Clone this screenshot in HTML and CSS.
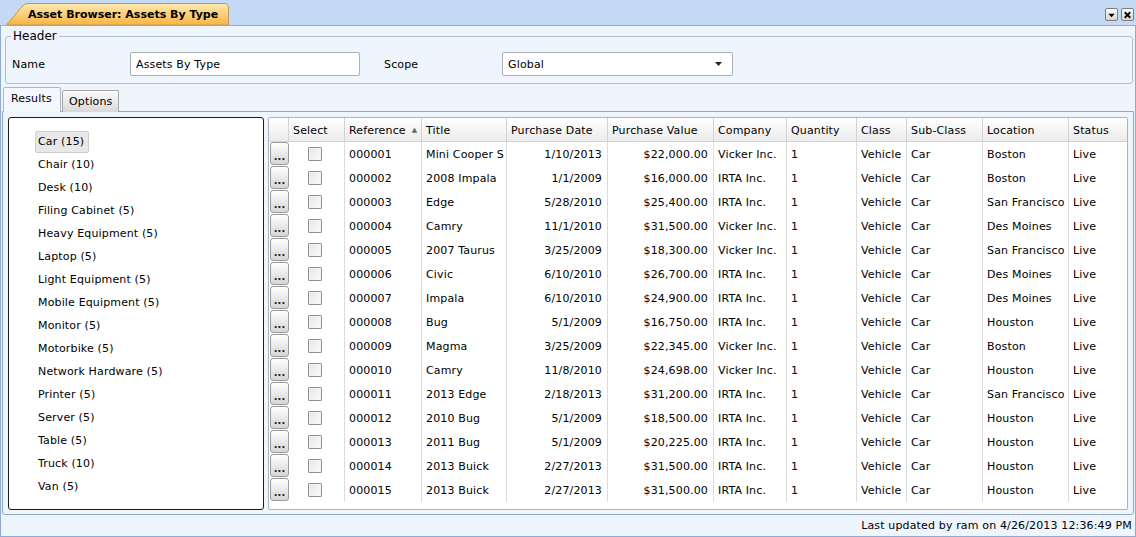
FILE: index.html
```html
<!DOCTYPE html>
<html>
<head>
<meta charset="utf-8">
<link rel="stylesheet" href="styles.css">
</head>
<body>
<div class="titlebar">
  <div class="doc-tab">
    <svg class="doc-tab-bg" width="224" height="22" viewBox="0 0 224 22">
      <defs>
        <linearGradient id="tabg" x1="0" y1="0" x2="0" y2="1">
          <stop offset="0" stop-color="#fde9b0"/>
          <stop offset="0.45" stop-color="#fcd27c"/>
          <stop offset="1" stop-color="#f8b443"/>
        </linearGradient>
      </defs>
      <path d="M0.5 22 L16.5 3 Q18.5 0.5 22 0.5 L219 0.5 Q222.5 0.5 222.5 4 L222.5 22 Z" fill="url(#tabg)" stroke="#c4964f" stroke-width="1"/>
    </svg>
    <span class="doc-tab-text">Asset Browser: Assets By Type</span>
  </div>
  <div class="win-buttons">
    <span class="win-btn"><svg width="12" height="12" viewBox="0 0 12 12"><polygon points="2.5,4.5 9.5,4.5 6,8.5" fill="#000"/></svg></span>
    <span class="win-btn"><svg width="12" height="12" viewBox="0 0 12 12"><path d="M3 3 L9 9 M9 3 L3 9" stroke="#000" stroke-width="2"/></svg></span>
  </div>
</div>
<div class="panel">
  <fieldset class="header-box">
    <legend>Header</legend>
    <div class="header-row">
      <span class="field-label">Name</span>
      <div class="text-input">Assets By Type</div>
      <span class="field-label scope-label">Scope</span>
      <div class="select-input"><span>Global</span><svg width="8" height="5" viewBox="0 0 8 5"><polygon points="0,0 7,0 3.5,4" fill="#222"/></svg></div>
    </div>
  </fieldset>
  <div class="tabs">
    <div class="tab active">Results</div>
    <div class="tab">Options</div>
  </div>
  <div class="pane">
    <ul class="listbox">
      <li class="selected">Car (15)</li>
      <li>Chair (10)</li>
      <li>Desk (10)</li>
      <li>Filing Cabinet (5)</li>
      <li>Heavy Equipment (5)</li>
      <li>Laptop (5)</li>
      <li>Light Equipment (5)</li>
      <li>Mobile Equipment (5)</li>
      <li>Monitor (5)</li>
      <li>Motorbike (5)</li>
      <li>Network Hardware (5)</li>
      <li>Printer (5)</li>
      <li>Server (5)</li>
      <li>Table (5)</li>
      <li>Truck (10)</li>
      <li>Van (5)</li>
    </ul>
    <div class="grid">
      <div class="grid-table">
        <div class="row head">
          <div class="h"></div><div class="h">Select</div><div class="h">Reference<span class="sort">▲</span></div><div class="h">Title</div><div class="h">Purchase Date</div><div class="h">Purchase Value</div><div class="h">Company</div><div class="h">Quantity</div><div class="h">Class</div><div class="h">Sub-Class</div><div class="h">Location</div><div class="h">Status</div>
        </div>
        <div class="row"><div class="c b"><span class="btn">...</span></div><div class="c s"><span class="chk"></span></div><div class="c">000001</div><div class="c">Mini Cooper S</div><div class="c r">1/10/2013</div><div class="c r">$22,000.00</div><div class="c">Vicker Inc.</div><div class="c">1</div><div class="c">Vehicle</div><div class="c">Car</div><div class="c">Boston</div><div class="c">Live</div></div>
        <div class="row"><div class="c b"><span class="btn">...</span></div><div class="c s"><span class="chk"></span></div><div class="c">000002</div><div class="c">2008 Impala</div><div class="c r">1/1/2009</div><div class="c r">$16,000.00</div><div class="c">IRTA Inc.</div><div class="c">1</div><div class="c">Vehicle</div><div class="c">Car</div><div class="c">Boston</div><div class="c">Live</div></div>
        <div class="row"><div class="c b"><span class="btn">...</span></div><div class="c s"><span class="chk"></span></div><div class="c">000003</div><div class="c">Edge</div><div class="c r">5/28/2010</div><div class="c r">$25,400.00</div><div class="c">IRTA Inc.</div><div class="c">1</div><div class="c">Vehicle</div><div class="c">Car</div><div class="c">San Francisco</div><div class="c">Live</div></div>
        <div class="row"><div class="c b"><span class="btn">...</span></div><div class="c s"><span class="chk"></span></div><div class="c">000004</div><div class="c">Camry</div><div class="c r">11/1/2010</div><div class="c r">$31,500.00</div><div class="c">Vicker Inc.</div><div class="c">1</div><div class="c">Vehicle</div><div class="c">Car</div><div class="c">Des Moines</div><div class="c">Live</div></div>
        <div class="row"><div class="c b"><span class="btn">...</span></div><div class="c s"><span class="chk"></span></div><div class="c">000005</div><div class="c">2007 Taurus</div><div class="c r">3/25/2009</div><div class="c r">$18,300.00</div><div class="c">Vicker Inc.</div><div class="c">1</div><div class="c">Vehicle</div><div class="c">Car</div><div class="c">San Francisco</div><div class="c">Live</div></div>
        <div class="row"><div class="c b"><span class="btn">...</span></div><div class="c s"><span class="chk"></span></div><div class="c">000006</div><div class="c">Civic</div><div class="c r">6/10/2010</div><div class="c r">$26,700.00</div><div class="c">IRTA Inc.</div><div class="c">1</div><div class="c">Vehicle</div><div class="c">Car</div><div class="c">Des Moines</div><div class="c">Live</div></div>
        <div class="row"><div class="c b"><span class="btn">...</span></div><div class="c s"><span class="chk"></span></div><div class="c">000007</div><div class="c">Impala</div><div class="c r">6/10/2010</div><div class="c r">$24,900.00</div><div class="c">IRTA Inc.</div><div class="c">1</div><div class="c">Vehicle</div><div class="c">Car</div><div class="c">Des Moines</div><div class="c">Live</div></div>
        <div class="row"><div class="c b"><span class="btn">...</span></div><div class="c s"><span class="chk"></span></div><div class="c">000008</div><div class="c">Bug</div><div class="c r">5/1/2009</div><div class="c r">$16,750.00</div><div class="c">IRTA Inc.</div><div class="c">1</div><div class="c">Vehicle</div><div class="c">Car</div><div class="c">Houston</div><div class="c">Live</div></div>
        <div class="row"><div class="c b"><span class="btn">...</span></div><div class="c s"><span class="chk"></span></div><div class="c">000009</div><div class="c">Magma</div><div class="c r">3/25/2009</div><div class="c r">$22,345.00</div><div class="c">Vicker Inc.</div><div class="c">1</div><div class="c">Vehicle</div><div class="c">Car</div><div class="c">Boston</div><div class="c">Live</div></div>
        <div class="row"><div class="c b"><span class="btn">...</span></div><div class="c s"><span class="chk"></span></div><div class="c">000010</div><div class="c">Camry</div><div class="c r">11/8/2010</div><div class="c r">$24,698.00</div><div class="c">Vicker Inc.</div><div class="c">1</div><div class="c">Vehicle</div><div class="c">Car</div><div class="c">Houston</div><div class="c">Live</div></div>
        <div class="row"><div class="c b"><span class="btn">...</span></div><div class="c s"><span class="chk"></span></div><div class="c">000011</div><div class="c">2013 Edge</div><div class="c r">2/18/2013</div><div class="c r">$31,200.00</div><div class="c">IRTA Inc.</div><div class="c">1</div><div class="c">Vehicle</div><div class="c">Car</div><div class="c">San Francisco</div><div class="c">Live</div></div>
        <div class="row"><div class="c b"><span class="btn">...</span></div><div class="c s"><span class="chk"></span></div><div class="c">000012</div><div class="c">2010 Bug</div><div class="c r">5/1/2009</div><div class="c r">$18,500.00</div><div class="c">IRTA Inc.</div><div class="c">1</div><div class="c">Vehicle</div><div class="c">Car</div><div class="c">Houston</div><div class="c">Live</div></div>
        <div class="row"><div class="c b"><span class="btn">...</span></div><div class="c s"><span class="chk"></span></div><div class="c">000013</div><div class="c">2011 Bug</div><div class="c r">5/1/2009</div><div class="c r">$20,225.00</div><div class="c">IRTA Inc.</div><div class="c">1</div><div class="c">Vehicle</div><div class="c">Car</div><div class="c">Houston</div><div class="c">Live</div></div>
        <div class="row"><div class="c b"><span class="btn">...</span></div><div class="c s"><span class="chk"></span></div><div class="c">000014</div><div class="c">2013 Buick</div><div class="c r">2/27/2013</div><div class="c r">$31,500.00</div><div class="c">IRTA Inc.</div><div class="c">1</div><div class="c">Vehicle</div><div class="c">Car</div><div class="c">Houston</div><div class="c">Live</div></div>
        <div class="row"><div class="c b"><span class="btn">...</span></div><div class="c s"><span class="chk"></span></div><div class="c">000015</div><div class="c">2013 Buick</div><div class="c r">2/27/2013</div><div class="c r">$31,500.00</div><div class="c">IRTA Inc.</div><div class="c">1</div><div class="c">Vehicle</div><div class="c">Car</div><div class="c">Houston</div><div class="c">Live</div></div>
      </div>
    </div>
  </div>
  <div class="footer">Last updated by ram on 4/26/2013 12:36:49 PM</div>
</div>
</body>
</html>
```

FILE: styles.css
```css
* { box-sizing: border-box; }
html, body { margin: 0; padding: 0; }
body {
  width: 1136px;
  height: 537px;
  display: flex;
  flex-direction: column;
  font-family: "DejaVu Sans", Verdana, sans-serif;
  font-size: 11px;
  letter-spacing: 0.15px;
  color: #000;
  background: #c4d9f4;
  overflow: hidden;
}

/* title bar */
.titlebar {
  height: 25px;
  flex: none;
  display: flex;
  align-items: flex-end;
  padding: 0 2px 0 6px;
  background: #c4d9f4;
}
.doc-tab {
  position: relative;
  width: 224px;
  height: 22px;
  display: flex;
  align-items: center;
  padding-left: 22px;
}
.doc-tab-bg { position: absolute; left: 0; top: 0; }
.doc-tab-text {
  position: relative;
  font-weight: bold;
  font-size: 11px;
  letter-spacing: 0;
  padding-top: 1px;
  color: #000;
}
.win-buttons {
  margin-left: auto;
  align-self: flex-start;
  margin-top: 8px;
  display: flex;
  gap: 3px;
}
.win-btn {
  width: 13px;
  height: 13px;
  border: 1px solid #7d7d7d;
  border-radius: 2px;
  background: linear-gradient(#ffffff, #d4d4d4);
  display: flex;
  align-items: center;
  justify-content: center;
}
.win-btn svg { display: block; }

/* main panel */
.panel {
  flex: 1;
  display: flex;
  flex-direction: column;
  border: 1px solid #8eabd8;
  padding: 1px;
  background: #eef5fd;
  min-height: 0;
}
.header-box {
  margin: 3px 1px 0 3px;
  padding: 0 6px 7px 6px;
  border: 1px solid #b3c0cf;
  border-radius: 3px;
  min-width: 0;
}
.header-box legend {
  padding: 0 2px;
  margin-left: -1px;
  line-height: 13px;
  font-size: 12px;
  letter-spacing: 0;
}
.header-row {
  display: flex;
  align-items: center;
  height: 24px;
  margin-top: 9px;
}
.field-label { width: 118px; }
.scope-label { margin-left: 24px; }
.text-input, .select-input {
  height: 24px;
  border: 1px solid #a9afb8;
  border-radius: 2px;
  background: #fff;
  display: flex;
  align-items: center;
  padding: 0 5px;
}
.text-input { width: 230px; }
.select-input {
  width: 231px;
  justify-content: space-between;
  padding-right: 9px;
}

/* tabs */
.tabs {
  display: flex;
  align-items: flex-end;
  gap: 1px;
  margin: 3px 0 -1px 1px;
  position: relative;
  z-index: 1;
}
.tab {
  height: 22px;
  padding: 0 6px;
  border: 1px solid #a6a6a6;
  border-bottom: none;
  border-radius: 2px 2px 0 0;
  background: linear-gradient(#fbfbfb, #d8d8d8);
  display: flex;
  align-items: center;
  width: 57px;
}
.tab.active {
  height: 25px;
  width: 58px;
  padding: 0 0 4px 7px;
  border-color: #a9b8c9;
  background: #f3f8fe;
}

/* pane */
.pane {
  flex: 1;
  min-height: 0;
  display: flex;
  gap: 4px;
  padding: 5px 5px 4px 5px;
  border: 1px solid #8fa5c2;
  border-radius: 0 0 3px 3px;
  background: #eef5fd;
}
.listbox {
  width: 256px;
  flex: none;
  margin: 0;
  list-style: none;
  padding: 13px 0 0 26px;
  border: 1px solid #1b1b1b;
  border-radius: 3px;
  background: #fff;
  display: flex;
  flex-direction: column;
  align-items: flex-start;
}
.listbox li {
  line-height: 20px;
  padding: 0 4px 0 2px;
  border: 1px solid transparent;
  border-radius: 2px;
  margin-bottom: 1px;
}
.listbox li.selected {
  background: #e8e8e8;
  border-color: #cdcdcd;
}

/* data grid */
.grid {
  width: 860px;
  flex: none;
  border: 1px solid #aab4be;
  border-radius: 2px;
  background: #fff;
  overflow: hidden;
}
.grid-table {
  display: grid;
  grid-template-columns: 20px 56px 77px 85px 101px 106px 73px 70px 50px 76px 86px 58px;
  grid-auto-rows: 24px;
}
.row { display: contents; }
.h {
  background: linear-gradient(#ffffff, #ebebeb);
  border-right: 1px solid #d3d3d3;
  border-bottom: 1px solid #d3d3d3;
  padding: 1px 4px 0 4px;
  display: flex;
  align-items: center;
  white-space: nowrap;
}
.h:last-child { border-right: none; }
.sort {
  font-size: 7px;
  color: #666;
  margin-left: 6px;
}
.c {
  border-right: 1px solid #dcdcdc;
  padding: 0 0 0 4px;
  display: flex;
  align-items: center;
  white-space: nowrap;
  overflow: hidden;
}
.c:last-child { border-right: none; }
.c.r { justify-content: flex-end; padding: 0 5px 0 0; }
.c.b { border-right: none; padding: 0 0 0 1px; align-items: stretch; }
.c.s { justify-content: center; padding: 0 4px 0 0; }
.btn {
  width: 19px;
  height: 23px;
  border: 1px solid #9b9b9b;
  border-radius: 3px;
  background: linear-gradient(#ffffff, #d6d6d6);
  display: flex;
  align-items: flex-end;
  justify-content: center;
  font-size: 10px;
  font-weight: bold;
  line-height: 15px;
  color: #222;
  letter-spacing: 0;
}
.chk {
  width: 14px;
  height: 14px;
  border: 1px solid #8e8f8f;
  border-radius: 1px;
  background: linear-gradient(135deg, #e3e6ea, #fbfbfb);
  box-shadow: inset 0 0 0 1px #f4f4f4;
}

/* footer */
.footer {
  height: 20px;
  flex: none;
  display: flex;
  align-items: center;
  justify-content: flex-end;
  padding-right: 2px;
}
```
